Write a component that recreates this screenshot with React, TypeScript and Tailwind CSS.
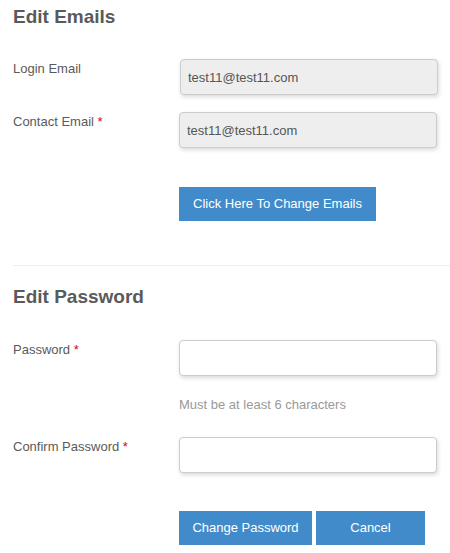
import React from 'react';

const Label = ({ text, required }: { text: string; required?: boolean }) => (
  <div className="w-[166px] shrink-0 text-[13px] leading-[20px]">
    {text}
    {required && <span className="text-[#d9001b]"> *</span>}
  </div>
);

const inputCls =
  "w-[258px] h-[36px] rounded-[4px] border border-[#cccccc] px-[7px] text-[13px] text-[#555] shadow-[1px_2px_4px_rgba(0,0,0,0.15)] outline-none";

const btnCls =
  "h-[34px] bg-[#428bca] text-white text-[13px] px-[13px]";

export default function App() {
  return (
    <div className="w-[450px] h-[553px] bg-white pl-[13px] text-[#5a5a5a] font-['Liberation_Sans',Arial,sans-serif] overflow-hidden">
      <h2 className="mt-[6px] text-[19px] leading-[22px] font-bold text-[#5a5a5a]">Edit Emails</h2>

      <div className="mt-[31px] flex items-start">
        <Label text="Login Email" />
        <input className={`${inputCls} bg-[#eeeeee] ml-px`} value="test11@test11.com" disabled readOnly />
      </div>
      <div className="mt-[17px] flex items-start">
        <Label text="Contact Email" required />
        <input className={`${inputCls} bg-[#eeeeee] px-[6px]`} value="test11@test11.com" disabled readOnly />
      </div>
      <div className="mt-[39px] pl-[166px]">
        <button className={`${btnCls} w-[197px]`}>Click Here To Change Emails</button>
      </div>

      <div className="mt-[44px] border-t border-[#eeeeee]" />

      <h2 className="mt-[20px] text-[19px] leading-[22px] font-bold text-[#5a5a5a]">Edit Password</h2>

      <div className="mt-[32px] flex items-start">
        <Label text="Password" required />
        <div className="flex flex-col">
          <input type="password" className={`${inputCls} bg-white`} />
          <p className="mt-[19px] text-[13px] leading-[20px] text-[#999]">Must be at least 6 characters</p>
        </div>
      </div>
      <div className="mt-[22px] flex items-start">
        <Label text="Confirm Password" required />
        <input type="password" className={`${inputCls} bg-white`} />
      </div>
      <div className="mt-[38px] pl-[166px] flex gap-[4px]">
        <button className={`${btnCls} w-[133px]`}>Change Password</button>
        <button className={`${btnCls} w-[109px]`}>Cancel</button>
      </div>
    </div>
  );
}
